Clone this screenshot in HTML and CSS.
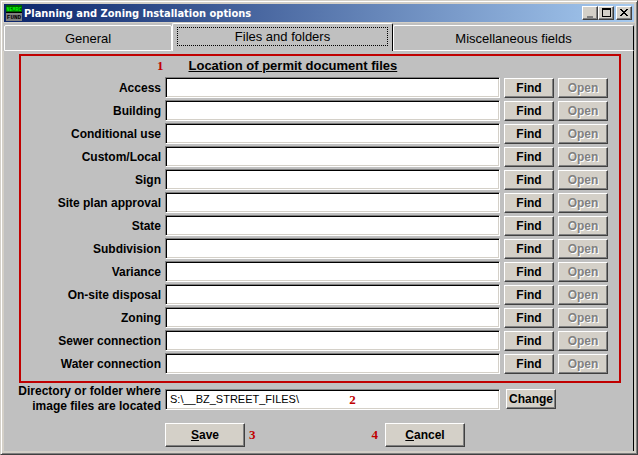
FILE: index.html
```html
<!DOCTYPE html>
<html lang="en">
<head>
    <meta charset="UTF-8">
    <meta name="viewport" content="width=device-width, initial-scale=1.0">
    <title>Planning and Zoning Installation options</title>
    <link rel="stylesheet" href="styles.css">
</head>
<body>
    <div class="window">
        <header class="title-bar">
            <svg class="app-icon" viewBox="0 0 16 16" width="16" height="16" aria-hidden="true">
                <rect width="16" height="7" fill="#006000"/>
                <rect y="7" width="16" height="1" fill="#000"/>
                <rect y="8" width="16" height="8" fill="#808080"/>
                <text x="8" y="6" text-anchor="middle" fill="#00ff00">NEMRC</text>
                <text x="8" y="14" text-anchor="middle" class="fund">FUND</text>
            </svg>
            <h1>Planning and Zoning Installation options</h1>
            <div class="window-buttons">
                <button type="button" aria-label="Minimize"><svg width="12" height="10" viewBox="0 0 12 10"><path d="M3 8h6v2H3z" fill="#808080"/></svg></button>
                <button type="button" aria-label="Maximize"><svg width="12" height="10" viewBox="0 0 12 10"><path d="M2 0h9v9H2zM3 2v6h7V2z" fill="#000" fill-rule="evenodd"/></svg></button>
                <button type="button" class="close" aria-label="Close"><svg width="12" height="10" viewBox="0 0 12 10"><path d="M2 1h2v1h1v1h2V2h1V1h2v1H9v1H8v1H7v1h1v1h1v1h1v1H8V7H7V6H5v1H4v1H2V7h1V6h1V5h1V4H4V3H3V2H2z" fill="#000"/></svg></button>
            </div>
        </header>

        <nav class="tabs">
            <button type="button" class="tab">General</button>
            <button type="button" class="tab active"><span>Files and folders</span></button>
            <button type="button" class="tab">Miscellaneous fields</button>
        </nav>

        <form class="panel">
            <section class="permit-files">
                <div class="heading">
                    <span class="mark">1</span>
                    <h2>Location of permit document files</h2>
                </div>
                <div class="row">
                    <label for="access">Access</label>
                    <input type="text" id="access">
                    <button type="button">Find</button>
                    <button type="button" disabled>Open</button>
                </div>
                <div class="row">
                    <label for="building">Building</label>
                    <input type="text" id="building">
                    <button type="button">Find</button>
                    <button type="button" disabled>Open</button>
                </div>
                <div class="row">
                    <label for="conditional">Conditional use</label>
                    <input type="text" id="conditional">
                    <button type="button">Find</button>
                    <button type="button" disabled>Open</button>
                </div>
                <div class="row">
                    <label for="custom">Custom/Local</label>
                    <input type="text" id="custom">
                    <button type="button">Find</button>
                    <button type="button" disabled>Open</button>
                </div>
                <div class="row">
                    <label for="sign">Sign</label>
                    <input type="text" id="sign">
                    <button type="button">Find</button>
                    <button type="button" disabled>Open</button>
                </div>
                <div class="row">
                    <label for="siteplan">Site plan approval</label>
                    <input type="text" id="siteplan">
                    <button type="button">Find</button>
                    <button type="button" disabled>Open</button>
                </div>
                <div class="row">
                    <label for="state">State</label>
                    <input type="text" id="state">
                    <button type="button">Find</button>
                    <button type="button" disabled>Open</button>
                </div>
                <div class="row">
                    <label for="subdivision">Subdivision</label>
                    <input type="text" id="subdivision">
                    <button type="button">Find</button>
                    <button type="button" disabled>Open</button>
                </div>
                <div class="row">
                    <label for="variance">Variance</label>
                    <input type="text" id="variance">
                    <button type="button">Find</button>
                    <button type="button" disabled>Open</button>
                </div>
                <div class="row">
                    <label for="disposal">On-site disposal</label>
                    <input type="text" id="disposal">
                    <button type="button">Find</button>
                    <button type="button" disabled>Open</button>
                </div>
                <div class="row">
                    <label for="zoning">Zoning</label>
                    <input type="text" id="zoning">
                    <button type="button">Find</button>
                    <button type="button" disabled>Open</button>
                </div>
                <div class="row">
                    <label for="sewer">Sewer connection</label>
                    <input type="text" id="sewer">
                    <button type="button">Find</button>
                    <button type="button" disabled>Open</button>
                </div>
                <div class="row">
                    <label for="water">Water connection</label>
                    <input type="text" id="water">
                    <button type="button">Find</button>
                    <button type="button" disabled>Open</button>
                </div>
            </section>

            <div class="row image-folder">
                <label for="images">Directory or folder where<br>image files are located</label>
                <div class="field">
                    <input type="text" id="images" value="S:\__BZ_STREET_FILES\">
                    <span class="mark">2</span>
                </div>
                <button type="button">Change</button>
            </div>

            <div class="actions">
                <button type="submit"><u>S</u>ave</button>
                <span class="mark">3</span>
                <span class="mark cancel-mark">4</span>
                <button type="button"><u>C</u>ancel</button>
            </div>
        </form>
    </div>
</body>
</html>
```

FILE: styles.css
```css
* {
    box-sizing: border-box;
}

body {
    margin: 0;
    background-color: #d4d0c8;
    font-family: "Liberation Sans", Arial, sans-serif;
    font-size: 12px;
    color: #000;
}

/* Window frame */
.window {
    display: flex;
    flex-direction: column;
    min-height: 100vh;
    padding: 2px;
    background-color: #d4d0c8;
    border: 1px solid;
    border-color: #d4d0c8 #404040 #404040 #d4d0c8;
    box-shadow: inset 1px 1px #fff, inset -1px -1px #808080;
}

.title-bar {
    display: flex;
    align-items: center;
    height: 18px;
    margin: 1px 1px 0;
    padding: 0 2px;
    background: linear-gradient(to right, #0a246a, #a6caf0);
}

.app-icon {
    flex: none;
    font: bold 5px "Liberation Mono", monospace;
}

.app-icon .fund {
    font-size: 6px;
}

.title-bar h1 {
    flex: 1;
    margin: 0 0 0 2px;
    font: bold 11px "DejaVu Sans Condensed", "DejaVu Sans", sans-serif;
    color: #fff;
    white-space: nowrap;
}

.window-buttons {
    display: flex;
}

/* Buttons */
button {
    padding: 0;
    background-color: #d4d0c8;
    border: 1px solid;
    border-color: #fff #404040 #404040 #fff;
    box-shadow: inset -1px -1px #808080;
    font: bold 12px "Liberation Sans", Arial, sans-serif;
    color: #000;
}

button:disabled {
    color: #808080;
    text-shadow: 1px 1px #fff;
}

.window-buttons button {
    display: flex;
    width: 16px;
    height: 14px;
    padding: 1px 0 0 1px;
}

.window-buttons .close {
    margin-left: 2px;
}

/* Tabs */
.tabs {
    display: grid;
    grid-template-columns: 168fr 221fr 241fr;
    align-items: end;
    margin-top: 1px;
    padding: 0 1px;
    height: 28px;
    background-color: #c0c0c0;
}

.tab {
    height: 26px;
    background-color: #c0c0c0;
    border: 1px solid #fff;
    border-radius: 2px 2px 0 0;
    box-shadow: none;
    font-size: 13px;
    font-weight: normal;
}

.tab:last-child {
    border-right: 1px solid #000;
}

.tab.active {
    height: 28px;
    padding: 2px 4px 5px;
    border-right: 1px solid #000;
    border-bottom: none;
}

.tab.active span {
    display: block;
    border: 1px dotted #000;
    line-height: 17px;
}

/* Panel */
.panel {
    flex: 1;
    margin: 0 1px 1px;
    padding: 3px 12px 0 15px;
    background-color: #c0c0c0;
    border-right: 1px solid #000;
}

.permit-files {
    padding: 2px 11px 6px 0;
    border: 2px solid #c00000;
}

.heading {
    display: flex;
    height: 18px;
    padding-left: 136px;
}

.heading h2 {
    margin: 0 0 0 25px;
    font-size: 13px;
    line-height: 16px;
    text-decoration: underline;
}

.mark {
    font: bold 13px/16px "Liberation Serif", "Times New Roman", serif;
    color: #c00000;
}

.row {
    display: grid;
    grid-template-columns: 140px 1fr 50px 50px;
    align-items: center;
    column-gap: 4px;
    height: 23px;
}

.row label {
    text-align: right;
}

label {
    font-weight: bold;
}

input {
    width: 100%;
    height: 21px;
    padding: 0 4px;
    background-color: #fff;
    border: 1px solid;
    border-color: #808080 #fff #fff #808080;
    box-shadow: inset 1px 1px #000, inset -1px -1px #d4d0c8;
    font: 11px "Liberation Sans", Arial, sans-serif;
}

.row button {
    height: 20px;
}

/* The two-line label is wider than the ones in the frame */
.image-folder {
    grid-template-columns: 152px 1fr 52px;
    height: 32px;
    margin-left: -10px;
    padding-right: 65px;
}

.image-folder label {
    line-height: 15px;
}

.image-folder button {
    margin-left: 2px;
}

.field {
    position: relative;
}

.field .mark {
    position: absolute;
    top: 3px;
    left: 55%;
}

.actions {
    display: flex;
    align-items: center;
    gap: 4px;
    margin-top: 8px;
    padding-left: 146px;
}

.actions button {
    width: 80px;
    height: 24px;
}

.cancel-mark {
    margin: 0 3px 0 112px;
}
```
